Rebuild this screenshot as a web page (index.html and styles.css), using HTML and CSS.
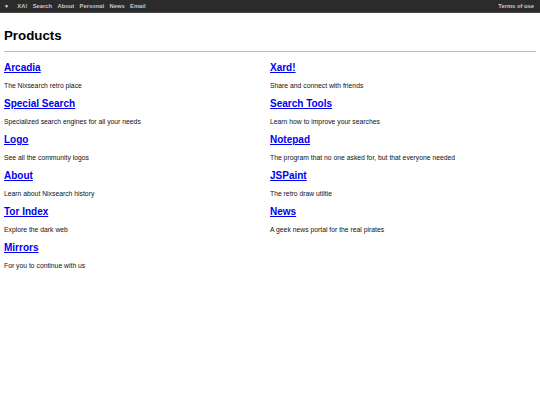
FILE: index.html
```html
<!DOCTYPE html>
<html>
<head>
<meta charset="utf-8">
<link rel="stylesheet" href="styles.css">
</head>
<body>
<nav class="topbar">
  <div class="nav-left">
    <span class="nav-item nav-caret">▼</span>
    <a class="nav-item" href="#">XA!</a>
    <a class="nav-item" href="#">Search</a>
    <a class="nav-item" href="#">About</a>
    <a class="nav-item" href="#">Personal</a>
    <a class="nav-item" href="#">News</a>
    <a class="nav-item" href="#">Email</a>
  </div>
  <a class="nav-item" href="#">Terms of use</a>
</nav>
<main class="content">
  <h1 class="title">Products</h1>
  <hr class="rule">
  <div class="products">
    <div class="product"><a class="product-name" href="#">Arcadia</a><p class="product-desc">The Nixsearch retro place</p></div>
    <div class="product"><a class="product-name" href="#">Xard!</a><p class="product-desc">Share and connect with friends</p></div>
    <div class="product"><a class="product-name" href="#">Special Search</a><p class="product-desc">Specialized search engines for all your needs</p></div>
    <div class="product"><a class="product-name" href="#">Search Tools</a><p class="product-desc">Learn how to improve your searches</p></div>
    <div class="product"><a class="product-name" href="#">Logo</a><p class="product-desc">See all the community logos</p></div>
    <div class="product"><a class="product-name" href="#">Notepad</a><p class="product-desc">The program that no one asked for, but that everyone needed</p></div>
    <div class="product"><a class="product-name" href="#">About</a><p class="product-desc">Learn about Nixsearch history</p></div>
    <div class="product"><a class="product-name" href="#">JSPaint</a><p class="product-desc">The retro draw utiltie</p></div>
    <div class="product"><a class="product-name" href="#">Tor Index</a><p class="product-desc">Explore the dark web</p></div>
    <div class="product"><a class="product-name" href="#">News</a><p class="product-desc">A geek news portal for the real pirates</p></div>
    <div class="product"><a class="product-name" href="#">Mirrors</a><p class="product-desc">For you to continue with us</p></div>
  </div>
</main>
</body>
</html>
```
FILE: styles.css
```css
html, body {
  margin: 0;
  padding: 0;
  background: #fff;
  font-family: "Liberation Sans", Arial, sans-serif;
}
.topbar {
  display: flex;
  justify-content: space-between;
  align-items: center;
  height: 12px;
  background: #2b2b2b;
  padding: 0 6px 0 4px;
  border-bottom: 1px solid #444;
}
.nav-left {
  display: flex;
  align-items: center;
  gap: 5.4px;
}
.nav-item {
  color: #c8c8c8;
  font-size: 5.8px;
  font-weight: bold;
  text-decoration: none;
  line-height: 12px;
}
.nav-caret {
  font-size: 5px;
  margin-right: 3px;
  color: #e0e0e0;
}
.content {
  padding: 0 4px;
}
.title {
  font-size: 13.3px;
  line-height: 15px;
  margin: 15px 0 0 0;
  color: #000;
}
.rule {
  border: 0;
  border-top: 1px solid #bdbdbd;
  margin: 8px 0 0 0;
  height: 0;
}
.products {
  display: grid;
  grid-template-columns: 1fr 1fr;
  padding-top: 10px;
}
.product {
  height: 36px;
}
.product-name {
  display: block;
  color: #0000ee;
  font-size: 10px;
  font-weight: bold;
  line-height: 12px;
  text-decoration: underline;
  width: max-content;
}
.product-desc {
  margin: 7.5px 0 0 0;
  font-size: 6.8px;
  line-height: 8px;
  color: #111;
}
```
